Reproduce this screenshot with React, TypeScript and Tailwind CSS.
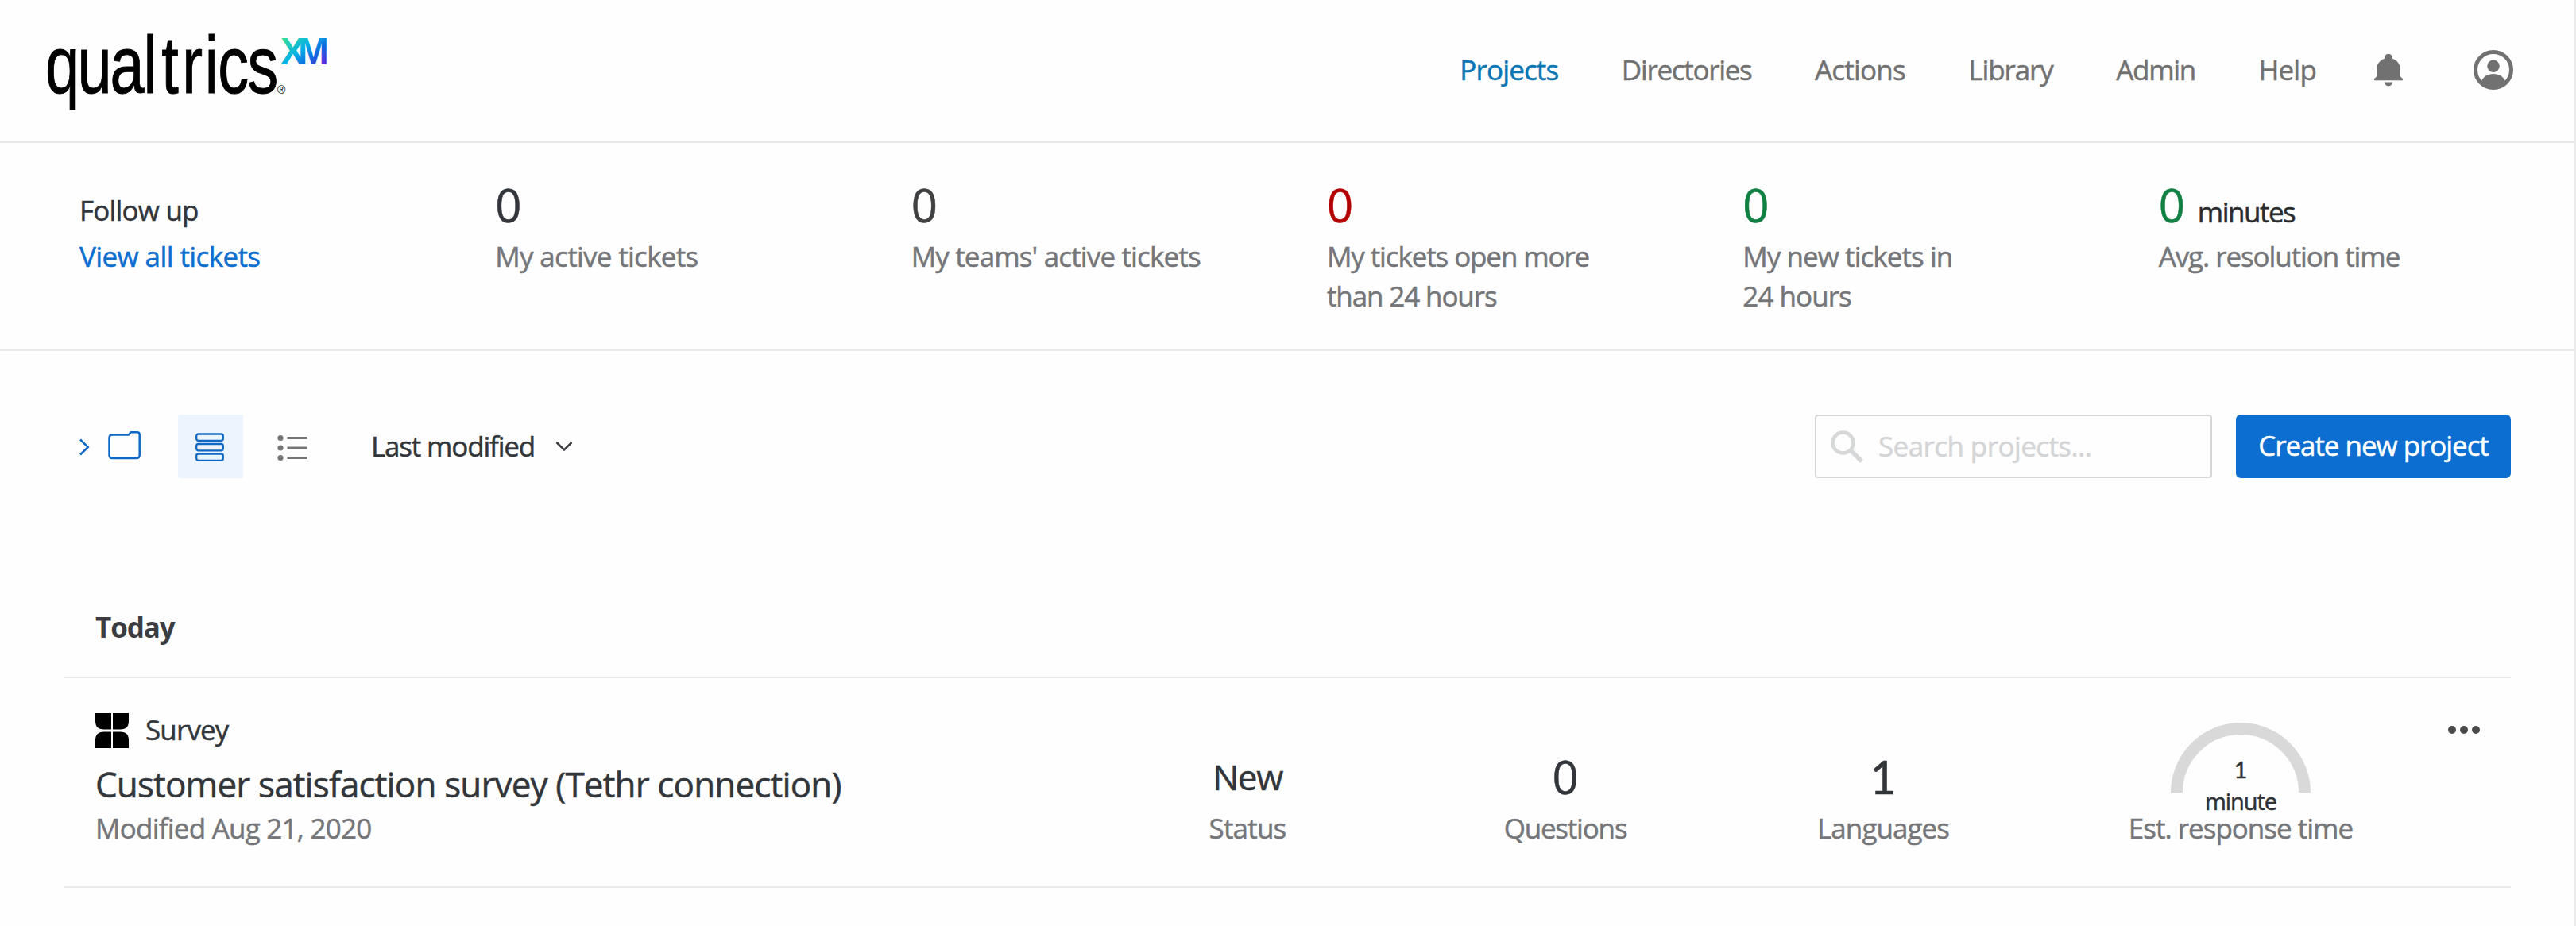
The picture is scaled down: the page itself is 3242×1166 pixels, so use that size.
import React from 'react';
import clsx from 'clsx';

interface NavItem {
  label: string;
  tracking: string;
  active?: boolean;
}

interface TicketStat {
  value: string;
  unit?: string;
  color: string;
  lines: string[];
  tracking: string;
}

const navItems: NavItem[] = [
  { label: 'Projects', tracking: 'tracking-[-0.85px]', active: true },
  { label: 'Directories', tracking: 'tracking-[-1.3px]' },
  { label: 'Actions', tracking: 'tracking-[-0.8px]' },
  { label: 'Library', tracking: 'tracking-[-1.1px]' },
  { label: 'Admin', tracking: 'tracking-[-1.3px]' },
  { label: 'Help', tracking: 'tracking-[-0.8px]' },
];

const ticketStats: TicketStat[] = [
  { value: '0', color: 'text-[#32363c]', lines: ['My active tickets'], tracking: 'tracking-[-0.7px]' },
  { value: '0', color: 'text-[#404142]', lines: ["My teams' active tickets"], tracking: 'tracking-[-0.85px]' },
  { value: '0', color: 'text-[#b40000]', lines: ['My tickets open more', 'than 24 hours'], tracking: 'tracking-[-1.12px]' },
  { value: '0', color: 'text-[#118043]', lines: ['My new tickets in', '24 hours'], tracking: 'tracking-[-0.95px]' },
  { value: '0', unit: 'minutes', color: 'text-[#118043]', lines: ['Avg. resolution time'], tracking: 'tracking-[-1.08px]' },
];

const Logo = () => (
  <svg width="370" height="120" viewBox="50 30 370 120" className="block overflow-visible [-webkit-text-stroke:0px]">
    <defs>
      <linearGradient id="xm" x1="0" y1="0" x2="1" y2="1">
        <stop offset="0.15" stopColor="#2fdc9c" />
        <stop offset="0.45" stopColor="#05b0e8" />
        <stop offset="0.65" stopColor="#1068de" />
        <stop offset="0.85" stopColor="#5a28d8" />
      </linearGradient>
    </defs>
    <text
      transform="translate(0 117) scale(0.76 1)"
      x="75 128.2 182.2 237.6 267.5 301.5 339 360.8 410"
      y="0"
      fontSize="102"
      fontFamily="Liberation Sans, Arial, sans-serif"
      stroke="#000"
      strokeWidth="1"
    >
      qualtrics
    </text>
    <text x="349" y="118" fontSize="14" fontFamily="Liberation Sans, Arial, sans-serif">®</text>
    <text
      transform="translate(353 81) scale(0.97 1)"
      x="0 22.800"
      y="0"
      fontSize="48"
      fontWeight="bold"
      fontFamily="Liberation Sans, Arial, sans-serif"
      fill="url(#xm)"
    >
      XM
    </text>
  </svg>
);

const BellIcon = () => (
  <svg width="36" height="41" viewBox="0 0 36 41" fill="#717171">
    <path d="M18 0c-3 0-5 2-5 5v.8C6.500 8.300 3 13 3 20v8.500L0 31.200V33.300h36v-2.100l-3-2.700V20c0-7-3.500-11.700-10-14.200V5c0-3-2-5-5-5z" />
    <path d="M13 35.500h10a5 5 0 0 1-10 0z" />
  </svg>
);

const UserIcon = () => (
  <svg width="50" height="50" viewBox="0 0 50 50">
    <defs>
      <clipPath id="user-clip">
        <circle cx="25" cy="25" r="24" />
      </clipPath>
    </defs>
    <circle cx="25" cy="25" r="22.500" fill="none" stroke="#717171" strokeWidth="5" />
    <circle cx="25" cy="20.200" r="7.700" fill="#717171" />
    <path d="M9.500 40C12 33.500 18 30 25 30s13 3.500 15.500 10L36 48H14z" fill="#717171" clipPath="url(#user-clip)" />
  </svg>
);

const Header = () => (
  <header className="flex h-[180px] items-start justify-between border-b-2 border-[#e9e9e9] pl-[50px] pr-[77px] pt-[30px]">
    <Logo />
    <div className="flex items-center pt-[33px]">
      <nav className="mr-[73px] flex gap-[79.5px]">
        {navItems.map(item => (
          <a
            key={item.label}
            className={clsx('leading-[50px]', item.tracking, item.active ? 'text-[#0a76b5]' : 'text-[#717171]')}
          >
            {item.label}
          </a>
        ))}
      </nav>
      <div className="mr-[89px]">
        <BellIcon />
      </div>
      <UserIcon />
    </div>
  </header>
);

const TicketSummary = () => (
  <section className="grid h-[262px] grid-cols-6 border-b-2 border-[#e9e9e9] pl-[100px] pt-12">
    <div>
      <div className="mb-[3px] pt-[7px] leading-[60px] tracking-[-0.8px] text-[#32363a]">Follow up</div>
      <a className="block leading-[50px] tracking-[-0.6px] text-[#0b6ed0]">View all tickets</a>
    </div>
    {ticketStats.map(stat => (
      <div key={stat.lines[0]}>
        <div className="mb-2.5 flex h-[60px] items-baseline">
          <span className={clsx('text-[58px] leading-[60px]', stat.color)}>{stat.value}</span>
          {stat.unit && <span className="ml-4 tracking-[-1.5px] text-[#2b2c2e]">{stat.unit}</span>}
        </div>
        {stat.lines.map(line => (
          <div key={line} className={clsx('leading-[50px] text-[#757679]', stat.tracking)}>{line}</div>
        ))}
      </div>
    ))}
  </section>
);

const Toolbar = () => (
  <div className="flex h-20 items-center justify-between">
    <div className="flex items-center pl-5">
      {/* Folder panel toggle */}
      <svg width="78" height="40" viewBox="0 0 78 40" fill="none" stroke="#0f69c4" strokeWidth="2.500">
        <path d="M1 11.500l9.800 9.500L1 30.500" />
        <path d="M41.500 5.500H62l2.500-3.200H72.500q3.200 0 3.200 3.200V31q0 4-4 4H41.500q-4 0-4-4V9.500q0-4 4-4z" strokeLinejoin="round" />
      </svg>

      <button className="ml-[46px] flex h-20 w-[82px] items-center justify-center rounded-[3px] bg-[#ecf4fd]">
        <svg width="36" height="36" viewBox="0 0 36 36" fill="none" stroke="#0f69c4" strokeWidth="2.300" className="-ml-0.5 mt-0.5">
          <rect x="1.200" y="1.500" width="33.600" height="8.300" rx="2.500" />
          <rect x="1.200" y="14" width="33.600" height="8.300" rx="2.500" />
          <rect x="1.200" y="26.500" width="33.600" height="8.300" rx="2.500" />
        </svg>
      </button>

      <svg width="38" height="34" viewBox="0 0 38 34" className="ml-[43px] mt-1" fill="#757577">
        <circle cx="4" cy="4.500" r="3.600" />
        <circle cx="4" cy="17" r="3.600" />
        <circle cx="4" cy="29.500" r="3.600" />
        <rect x="12.500" y="3" width="25" height="3" />
        <rect x="12.500" y="15.500" width="25" height="3" />
        <rect x="12.500" y="28" width="25" height="3" />
      </svg>

      <span className="ml-[80px] leading-[76px] tracking-[-1.18px] text-[#32363a]">Last modified</span>
      <svg width="22" height="14" viewBox="0 0 22 14" fill="none" stroke="#3b3d42" strokeWidth="2.500" className="ml-[26px]">
        <path d="M1.500 2l9.500 9.500L20.500 2" />
      </svg>
    </div>

    <div className="flex">
      <div className="mr-[30px] flex h-20 w-[500px] items-center rounded border-2 border-[#d6d6d6] pl-[18px]">
        <svg width="42" height="42" viewBox="0 0 42 42" fill="none" stroke="#d6d7d8" className="mt-0.5">
          <circle cx="15.500" cy="15.500" r="13" strokeWidth="4.500" />
          <path d="M24.500 24.500L39 39" strokeWidth="5.500" />
        </svg>
        <span className="ml-[18px] leading-[76px] tracking-[-0.58px] text-[#d4d5d7]">Search projects...</span>
      </div>
      <button className="h-20 w-[346px] rounded-md bg-[#0b6ed0] pb-0.5 tracking-[-1.05px] text-white">
        Create new project
      </button>
    </div>
  </div>
);

const SurveyIcon = () => (
  <svg width="42" height="44" viewBox="0 0 42 44">
    <path d="M0 0h20v20.500H10.500Q0 20.500 0 10z" />
    <path d="M42 0H22v20.500h9.500Q42 20.500 42 10z" />
    <path d="M0 44h20V23.500H10.500Q0 23.500 0 34z" />
    <path d="M42 44H22V23.500h9.500Q42 23.500 42 34z" />
  </svg>
);

interface MetricProps {
  label: string;
  tracking: string;
  children: React.ReactNode;
}

const Metric = ({ label, tracking, children }: MetricProps) => (
  <div className="w-[400px] pt-[94px] text-center">
    <div className="mb-2.5 h-[60px] leading-[60px] text-[#32363a]">{children}</div>
    <div className={clsx('leading-[50px] text-[#757679]', tracking)}>{label}</div>
  </div>
);

const ProjectRow = () => (
  <div className="flex h-[264px] border-b-2 border-[#ebebeb]">
    <div className="w-[1290px] pl-10 pt-11">
      <div className="flex items-start gap-[21px]">
        <SurveyIcon />
        <span className="leading-[42px] tracking-[-0.85px] text-[#32363a]">Survey</span>
      </div>
      <h3 className="mt-[15px] whitespace-nowrap text-[44px] leading-[60px] tracking-[-0.85px] text-[#32363a]">
        Customer satisfaction survey (Tethr connection)
      </h3>
      <div className="mt-px leading-[50px] tracking-[-0.76px] text-[#757679]">Modified Aug 21, 2020</div>
    </div>

    <Metric label="Status" tracking="tracking-[-0.8px]">
      <span className="text-[44px] tracking-[-1.4px]">New</span>
    </Metric>
    <Metric label="Questions" tracking="tracking-[-1.2px]">
      <span className="text-[58px]">0</span>
    </Metric>
    <Metric label="Languages" tracking="tracking-[-0.95px]">
      <span className="font-['Lato'] text-[58px]">1</span>
    </Metric>

    {/* Response time gauge */}
    <div className="w-[500px] pt-[56px] text-center">
      <div className="relative h-[108px]">
        <svg width="176" height="88" viewBox="0 0 176 88" className="mx-auto block" fill="none">
          <path d="M7.500 88a80.500 80.500 0 0 1 161 0" stroke="#d9d9d9" strokeWidth="15" />
        </svg>
        <div className="absolute inset-x-0 top-[39px] text-[29px] leading-[40px] text-[#2f3236]">
          <div className="font-['Lato']">1</div>
          <div className="tracking-[-1.1px]">minute</div>
        </div>
      </div>
      <div className="leading-[50px] tracking-[-1px] text-[#757679]">Est. response time</div>
    </div>

    <div className="flex w-[90px] gap-[5px] pl-[11px] pt-[60px]">
      <i className="size-2.5 rounded-full bg-[#4a4a4a]" />
      <i className="size-2.5 rounded-full bg-[#4a4a4a]" />
      <i className="size-2.5 rounded-full bg-[#4a4a4a]" />
    </div>
  </div>
);

export default function App() {
  return (
    <div className="h-[1166px] w-[3242px] overflow-hidden border-r-2 border-[#ebebeb] bg-[#fefefe] font-['Open_Sans',sans-serif] text-[35px] [-webkit-text-stroke:0.5px]">
      <Header />
      <TicketSummary />
      <main className="pl-20 pr-20 pt-20">
        <Toolbar />
        <h2 className="mt-[163px] border-b-2 border-[#ebebeb] pb-[37px] pl-10 font-bold leading-[50px] tracking-[-1.1px] text-[#3b3d42] [-webkit-text-stroke:0px]">
          Today
        </h2>
        <ProjectRow />
      </main>
    </div>
  );
}
